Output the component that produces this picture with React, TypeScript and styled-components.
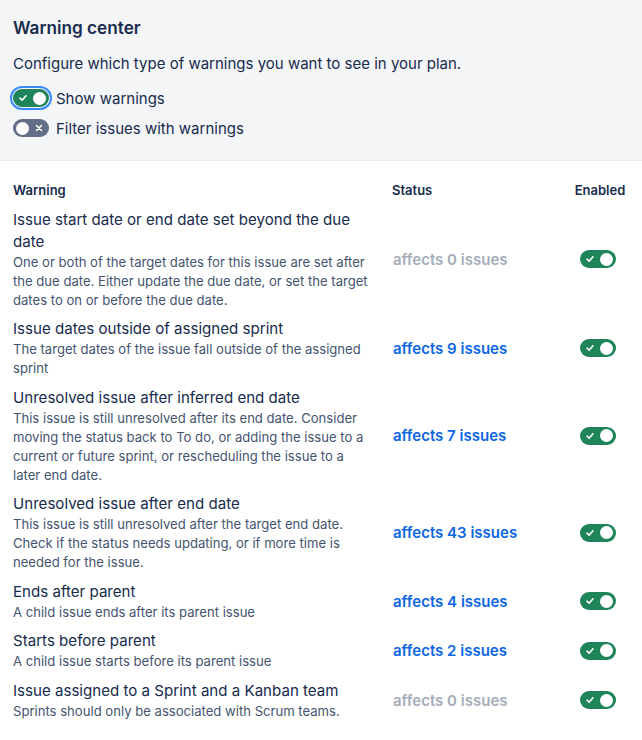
import React from 'react';
import styled, { createGlobalStyle } from 'styled-components';

const GlobalStyle = createGlobalStyle`
  html, body {
    margin: 0;
    padding: 0;
    background: #ffffff;
  }
  body {
    font-family: Inter, 'Noto Sans', sans-serif;
    color: #172b4d;
  }
`;

interface WarningItem {
  id: string;
  title: string;
  description: string;
  count: number;
}

const warnings: WarningItem[] = [
  {
    id: 'due',
    title: 'Issue start date or end date set beyond the due date',
    description:
      'One or both of the target dates for this issue are set after the due date. Either update the due date, or set the target dates to on or before the due date.',
    count: 0,
  },
  {
    id: 'sprint',
    title: 'Issue dates outside of assigned sprint',
    description: 'The target dates of the issue fall outside of the assigned sprint',
    count: 9,
  },
  {
    id: 'inferred',
    title: 'Unresolved issue after inferred end date',
    description:
      'This issue is still unresolved after its end date. Consider moving the status back to To do, or adding the issue to a current or future sprint, or rescheduling the issue to a later end date.',
    count: 7,
  },
  {
    id: 'end',
    title: 'Unresolved issue after end date',
    description:
      'This issue is still unresolved after the target end date. Check if the status needs updating, or if more time is needed for the issue.',
    count: 43,
  },
  {
    id: 'ends-parent',
    title: 'Ends after parent',
    description: 'A child issue ends after its parent issue',
    count: 4,
  },
  {
    id: 'starts-parent',
    title: 'Starts before parent',
    description: 'A child issue starts before its parent issue',
    count: 2,
  },
  {
    id: 'kanban',
    title: 'Issue assigned to a Sprint and a Kanban team',
    description: 'Sprints should only be associated with Scrum teams.',
    count: 0,
  },
];

const Page = styled.div`
  width: 642px;
  min-height: 740px;
  background: #ffffff;
`;

const Panel = styled.section`
  background: #f4f5f7;
  border-bottom: 1px solid #ebecf0;
  padding: 16px 13px 17px;
  display: flex;
  flex-direction: column;
`;

const Heading = styled.h2`
  margin: 0 0 13px;
  font-size: 17.2px;
  line-height: 24px;
  font-weight: 600;
  color: #172b4d;
`;

const Intro = styled.p`
  margin: 0 0 8px;
  font-size: 15px;
  line-height: 22px;
  color: #172b4d;
`;

const OptionRow = styled.label`
  display: flex;
  align-items: center;
  gap: 7px;
  height: 30px;
  font-size: 15px;
  color: #172b4d;
`;

const Track = styled.span<{ $on: boolean; $focused?: boolean }>`
  position: relative;
  display: inline-flex;
  align-items: center;
  flex: none;
  width: 36px;
  height: 18px;
  border-radius: 9px;
  background: ${(p) => (p.$on ? '#1f845a' : '#626f86')};
  box-shadow: ${(p) => (p.$focused ? '0 0 0 1px #f4f5f7, 0 0 0 3px #388bff' : 'none')};
`;

const Knob = styled.span<{ $on: boolean }>`
  position: absolute;
  top: 2.5px;
  left: ${(p) => (p.$on ? '20px' : '3px')};
  width: 13px;
  height: 13px;
  border-radius: 50%;
  background: #ffffff;
`;

const Glyph = styled.svg<{ $on: boolean }>`
  position: absolute;
  top: 5px;
  left: ${(p) => (p.$on ? '6px' : '22px')};
  width: 8px;
  height: 8px;
`;

function Toggle({ on, focused }: { on: boolean; focused?: boolean }) {
  return (
    <Track $on={on} $focused={focused}>
      {on ? (
        <Glyph $on viewBox="0 0 8 8">
          <path d="M1 4.2 L3.1 6.2 L7 1.8" fill="none" stroke="#fff" strokeWidth="1.6" strokeLinecap="round" strokeLinejoin="round" />
        </Glyph>
      ) : (
        <Glyph $on={false} viewBox="0 0 8 8">
          <path d="M1.5 1.5 L6.5 6.5 M6.5 1.5 L1.5 6.5" fill="none" stroke="#fff" strokeWidth="1.6" strokeLinecap="round" />
        </Glyph>
      )}
      <Knob $on={on} />
    </Track>
  );
}

const Table = styled.div`
  display: flex;
  flex-direction: column;
  gap: 8.5px;
  padding: 20px 16px 20px 13px;
`;

const Row = styled.div`
  display: grid;
  grid-template-columns: 379px 182px 52px;
  align-items: center;
`;

const HeadCell = styled.div<{ $center?: boolean }>`
  font-size: 13px;
  line-height: 19px;
  font-weight: 600;
  color: #172b4d;
  text-align: ${(p) => (p.$center ? 'center' : 'left')};
`;

const WarningCell = styled.div`
  padding-right: 20px;
  display: flex;
  flex-direction: column;
`;

const Title = styled.div`
  font-size: 15.1px;
  line-height: 22px;
  color: #172b4d;
`;

const Description = styled.div`
  font-size: 13.1px;
  line-height: 19px;
  color: #44546f;
`;

const Status = styled.a<{ $muted: boolean }>`
  font-size: 15px;
  font-weight: 600;
  text-decoration: none;
  padding-left: 1px;
  color: ${(p) => (p.$muted ? '#a5adba' : '#0c66e4')};
`;

const ToggleCell = styled.div`
  display: flex;
  justify-content: center;
  padding-right: 4px;
`;

export default function App() {
  return (
    <Page>
      <GlobalStyle />
      <Panel>
        <Heading>Warning center</Heading>
        <Intro>Configure which type of warnings you want to see in your plan.</Intro>
        <OptionRow>
          <Toggle on focused />
          Show warnings
        </OptionRow>
        <OptionRow>
          <Toggle on={false} />
          Filter issues with warnings
        </OptionRow>
      </Panel>
      <Table>
        <Row>
          <HeadCell>Warning</HeadCell>
          <HeadCell>Status</HeadCell>
          <HeadCell $center>Enabled</HeadCell>
        </Row>
        {warnings.map((w) => (
          <Row key={w.id}>
            <WarningCell>
              <Title>{w.title}</Title>
              <Description>{w.description}</Description>
            </WarningCell>
            <Status $muted={w.count === 0}>affects {w.count} issues</Status>
            <ToggleCell>
              <Toggle on />
            </ToggleCell>
          </Row>
        ))}
      </Table>
    </Page>
  );
}
